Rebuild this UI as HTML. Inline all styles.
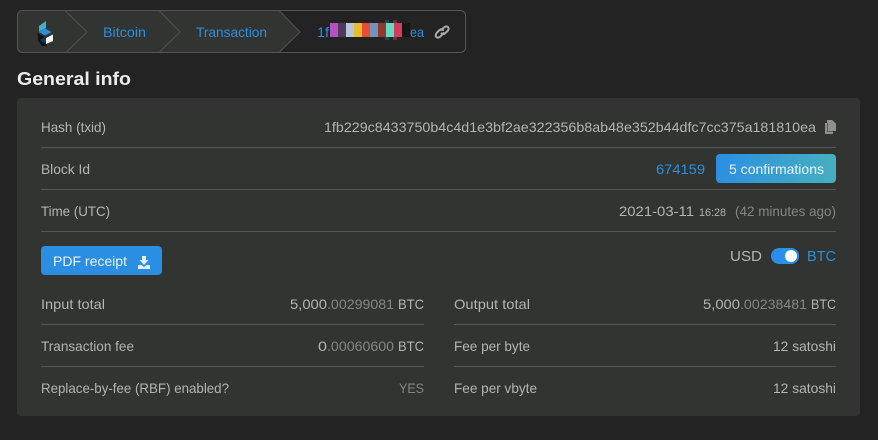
<!DOCTYPE html>
<html><head><meta charset="utf-8"><style>
html,body{margin:0;padding:0;background:#222322;width:878px;height:440px;overflow:hidden}
svg{display:block}
text{font-family:"Liberation Sans",sans-serif;font-size:14px;fill:#b4b5b3}
.b{fill:#2a8fe0}.w{fill:#eaf3fa}.d{fill:#858684}
</style></head><body>
<svg width="878" height="440" viewBox="0 0 878 440" xmlns="http://www.w3.org/2000/svg">
<defs><linearGradient id="g" x1="0" x2="1" y1="0" y2="0"><stop offset="0" stop-color="#2a8fe2"/><stop offset="1" stop-color="#46b0bf"/></linearGradient></defs>
<rect width="878" height="440" fill="#222322"/>
<!-- breadcrumb -->
<path d="M22 10.5H280L300 32L280 52.500H22Q17.500 52.500 17.500 48V15Q17.500 10.500 22 10.500Z" fill="#323432"/>
<rect x="17.500" y="10.500" width="448" height="42" rx="5" fill="none" stroke="#545554"/>
<path d="M65 10.500L87 32L66 52.500M159 10.500L180 32L159 52.500M279 10.500L300 32L279 52.500" fill="none" stroke="#4f504f"/>
<path d="M37.500 33L45 37L47 46H42L38 41Z" fill="#111412"/>
<path d="M39 26L46 21V28L39 31.500Z" fill="#3fb0cf"/>
<path d="M39 32L45 28.500L51.500 32L45 35.500Z" fill="#2a8fe0"/>
<path d="M40 40L46 36V44Z" fill="#15395c"/>
<path d="M46 38L53 34.500V41L46 44Z" fill="#f3f5f5"/>
<text x="103" y="37" class="b" textLength="43" lengthAdjust="spacingAndGlyphs">Bitcoin</text>
<text x="196" y="37" class="b" textLength="71" lengthAdjust="spacingAndGlyphs">Transaction</text>
<text x="317" y="37" class="b" textLength="12" lengthAdjust="spacingAndGlyphs">1f</text>
<text x="410" y="37" class="b" textLength="14" lengthAdjust="spacingAndGlyphs">ea</text>
<rect x="385" y="20" width="4" height="20" fill="#2c4a43"/><rect x="393" y="20" width="4" height="20" fill="#5a3a34"/>
<rect x="330" y="23" width="8" height="14" fill="#b450c4"/><rect x="338" y="23" width="8" height="14" fill="#4e3a5c"/><rect x="346" y="23" width="8" height="14" fill="#b9c6d6"/><rect x="354" y="23" width="8" height="14" fill="#e6bd2f"/><rect x="362" y="23" width="8" height="14" fill="#ec4a35"/><rect x="370" y="23" width="8" height="14" fill="#7393bd"/><rect x="378" y="23" width="8" height="14" fill="#8f3a30"/><rect x="386" y="23" width="8" height="14" fill="#62dcc0"/><rect x="394" y="23" width="8" height="14" fill="#d23c60"/><rect x="402" y="23" width="8" height="14" fill="#161612"/>
<g fill="none" stroke="#a8a8a6" stroke-width="2" stroke-linecap="round"><path d="M441 30L444 27.500Q446 25.500 448 27Q449.500 29 447.500 31L445 33.500Q443 35 441.500 33.500"/><path d="M443.500 33L440.500 36.500Q438 38.500 436.300 37Q434.800 35 437 32.500L439.500 30Q441.500 28.500 443 30"/></g>
<text x="17" y="85" style="font-size:18.500px;font-weight:700;fill:#ececea" textLength="114" lengthAdjust="spacingAndGlyphs">General info</text>
<!-- card -->
<rect x="17" y="98" width="843" height="318" rx="4" fill="#323432"/>
<path d="M41 147.500H836M41 189.500H836M41 231.500H836M41 324.500H424M454 324.500H836M41 366.500H424M454 366.500H836" stroke="#565756" stroke-width="1"/>
<text x="41" y="132" textLength="65" lengthAdjust="spacingAndGlyphs">Hash (txid)</text>
<text x="324" y="132" textLength="492" lengthAdjust="spacingAndGlyphs">1fb229c8433750b4c4d1e3bf2ae322356b8ab48e352b44dfc7cc375a181810ea</text>
<path d="M827 120H832L836 123.500V131H833V134H825V123H827Z" fill="#8f908e"/><path d="M827 123H828V131H833V132H827Z" fill="#5e5f5d"/>
<text x="41" y="174" textLength="49" lengthAdjust="spacingAndGlyphs">Block Id</text>
<text x="656" y="174" class="b" textLength="49" lengthAdjust="spacingAndGlyphs">674159</text>
<rect x="716" y="154" width="120" height="29" rx="4" fill="url(#g)"/>
<text x="729" y="174" class="w" textLength="95" lengthAdjust="spacingAndGlyphs">5 confirmations</text>
<text x="41" y="216" textLength="69" lengthAdjust="spacingAndGlyphs">Time (UTC)</text>
<text x="619" y="216" textLength="75" lengthAdjust="spacingAndGlyphs">2021-03-11</text>
<text x="699" y="216" style="font-size:11px" textLength="27" lengthAdjust="spacingAndGlyphs">16:28</text>
<text x="735" y="216" class="d" textLength="101" lengthAdjust="spacingAndGlyphs">(42 minutes ago)</text>
<rect x="41" y="246" width="121" height="29" rx="4" fill="#2a8fe2"/>
<text x="53" y="266" class="w" textLength="74" lengthAdjust="spacingAndGlyphs">PDF receipt</text>
<path d="M142 256V260H139.500L144 265L148.500 260H146V256Z" fill="#e6f1fa"/><path d="M138 265H141.500L144 267L146.500 265H150V269H138Z" fill="#e6f1fa"/>
<text x="730" y="261" style="font-size:15px" textLength="32" lengthAdjust="spacingAndGlyphs">USD</text>
<rect x="771" y="248" width="28" height="16" rx="8" fill="#2a8fe8"/><circle cx="791" cy="256" r="6" fill="#fff"/>
<text x="807" y="261" class="b" style="font-size:15px" textLength="29" lengthAdjust="spacingAndGlyphs">BTC</text>
<text x="41" y="309" textLength="64" lengthAdjust="spacingAndGlyphs">Input total</text>
<text x="290" y="309" textLength="37" lengthAdjust="spacingAndGlyphs">5,000</text><text x="327" y="309" class="d" textLength="67" lengthAdjust="spacingAndGlyphs">.00299081</text><text x="398" y="309" textLength="26" lengthAdjust="spacingAndGlyphs">BTC</text>
<text x="454" y="309" textLength="76" lengthAdjust="spacingAndGlyphs">Output total</text>
<text x="703" y="309" textLength="37" lengthAdjust="spacingAndGlyphs">5,000</text><text x="740" y="309" class="d" textLength="67" lengthAdjust="spacingAndGlyphs">.00238481</text><text x="811" y="309" textLength="25" lengthAdjust="spacingAndGlyphs">BTC</text>
<text x="41" y="351" textLength="93" lengthAdjust="spacingAndGlyphs">Transaction fee</text>
<text x="318" y="351" textLength="9" lengthAdjust="spacingAndGlyphs">0</text><text x="327" y="351" class="d" textLength="67" lengthAdjust="spacingAndGlyphs">.00060600</text><text x="398" y="351" textLength="26" lengthAdjust="spacingAndGlyphs">BTC</text>
<text x="454" y="351" textLength="76" lengthAdjust="spacingAndGlyphs">Fee per byte</text>
<text x="773" y="351" textLength="63" lengthAdjust="spacingAndGlyphs">12 satoshi</text>
<text x="41" y="393" textLength="188" lengthAdjust="spacingAndGlyphs">Replace-by-fee (RBF) enabled?</text>
<text x="399" y="393" class="d" textLength="25" lengthAdjust="spacingAndGlyphs">YES</text>
<text x="454" y="393" textLength="83" lengthAdjust="spacingAndGlyphs">Fee per vbyte</text>
<text x="773" y="393" textLength="63" lengthAdjust="spacingAndGlyphs">12 satoshi</text>
</svg>
</body></html>
